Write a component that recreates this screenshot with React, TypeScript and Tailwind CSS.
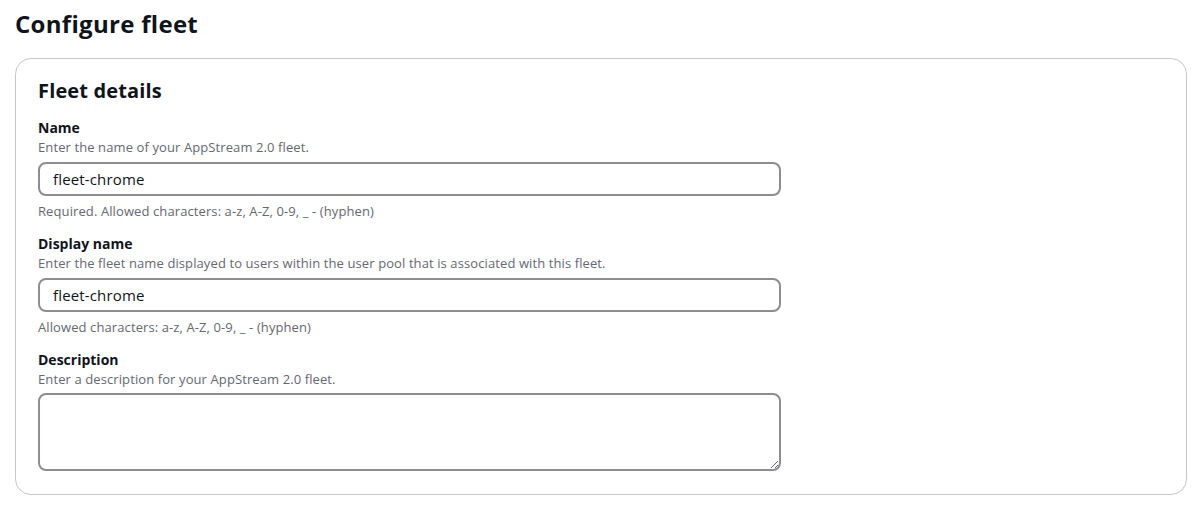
export default function App() {
  const font = { fontFamily: '"Open Sans", "Noto Sans", Arial, sans-serif' };
  const hint = "text-[13px] leading-[16px] tracking-[0.1px] text-[#656871]";
  const field =
    "mt-[7px] w-[743px] h-[34px] border-2 border-[#8c8c94] rounded-[8px] px-[13px] text-[15px] tracking-[0.15px] outline-none text-[#0f141a]";
  return (
    <div className="min-h-screen bg-white pl-[15px] pr-[12px] pt-[9px] text-[#0f141a]" style={font}>
      <h1 className="text-[24px] leading-[30px] font-bold tracking-[0.3px]">Configure fleet</h1>

      <div className="mt-[19px] border border-[#c6c6cd] rounded-[16px] px-[22px] pt-[20px] pb-[23px]">
        <h2 className="text-[20px] leading-[24px] font-bold tracking-[0.15px]">Fleet details</h2>

        <div className="mt-[15px] flex flex-col">
          <label className="text-[14px] leading-[20px] font-bold">Name</label>
          <p className={`${hint} mt-[1px]`}>Enter the name of your AppStream 2.0 fleet.</p>
          <input readOnly value="fleet-chrome" className={field} />
          <p className={`${hint} mt-[7px]`}>Required. Allowed characters: a-z, A-Z, 0-9, _ - (hyphen)</p>
        </div>

        <div className="mt-[15px] flex flex-col">
          <label className="text-[14px] leading-[20px] font-bold">Display name</label>
          <p className={`${hint} mt-[1px]`}>
            Enter the fleet name displayed to users within the user pool that is associated with this fleet.
          </p>
          <input readOnly value="fleet-chrome" className={field} />
          <p className={`${hint} mt-[7px]`}>Allowed characters: a-z, A-Z, 0-9, _ - (hyphen)</p>
        </div>

        <div className="mt-[15px] flex flex-col">
          <label className="text-[14px] leading-[20px] font-bold">Description</label>
          <p className={`${hint} mt-[1px]`}>Enter a description for your AppStream 2.0 fleet.</p>
          <textarea
            readOnly
            className="mt-[6px] w-[743px] h-[78px] border-2 border-[#8c8c94] rounded-[8px] px-[13px] py-[6px] text-[15px] outline-none block"
          />
        </div>
      </div>
    </div>
  );
}
